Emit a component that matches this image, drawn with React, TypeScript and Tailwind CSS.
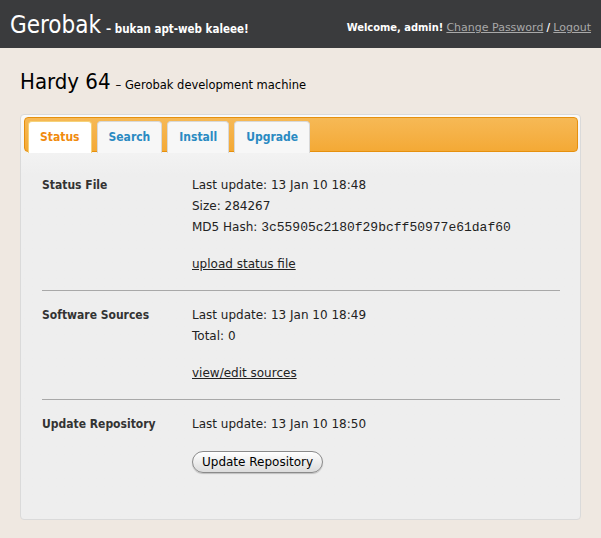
import React from "react";

const tabs = ["Status", "Search", "Install", "Upgrade"];

function Row({ label, children }: { label: string; children: React.ReactNode }) {
  return (
    <div className="grid grid-cols-[150px_1fr] pt-[14px] pb-[15px]">
      <div className="font-['DejaVu_Sans_Condensed',sans-serif] font-bold text-[#333]">{label}</div>
      <div>{children}</div>
    </div>
  );
}

export default function App() {
  return (
    <div className="min-h-[538px] bg-[#efe8e1] font-['DejaVu_Sans',sans-serif] text-[12px] leading-[21px] text-[#222]">
      {/* Header */}
      <div className="flex h-12 items-center justify-between bg-[#3a3b3d] px-[10px] font-['DejaVu_Sans_Condensed',sans-serif] text-white">
        <div className="flex items-baseline gap-[5px] pt-[5px]">
          <span className="text-[24px] leading-none">Gerobak</span>
          <span className="text-[11.5px] font-bold">– bukan apt-web kaleee!</span>
        </div>
        <div className="pt-[7px] text-[11px]">
          <span className="font-bold">Welcome, admin!</span>{" "}
          <a href="#" className="font-['DejaVu_Sans',sans-serif] text-[#a9a9a9] underline">Change Password</a>{" "}
          <span className="font-bold">/</span>{" "}
          <a href="#" className="font-['DejaVu_Sans',sans-serif] text-[#a9a9a9] underline">Logout</a>
        </div>
      </div>

      {/* Title */}
      <div className="flex items-baseline gap-[5px] px-5 pt-[20px] pb-[18px]">
        <span className="font-['DejaVu_Sans_Condensed',sans-serif] text-[22px] leading-[28px] text-black">Hardy 64</span>
        <span className="text-[11.5px] text-black">– Gerobak development machine</span>
      </div>

      {/* Panel */}
      <div className="mx-5 rounded-[4px] border border-[#dadada] bg-gradient-to-b from-[#fafafa] to-[#eeeeee] to-[60px] pt-[2px] pr-[2px] pb-[31px] pl-[3px]">
        <div className="flex h-[35px] gap-[5px] rounded-[4px] border border-[#e6900e] bg-gradient-to-b from-[#f6b955] to-[#f4a935] px-[3px] pt-[3px]">
          {tabs.map((t, i) => (
            <div
              key={t}
              className={
                "flex h-[32px] items-center rounded-t-[4px] border border-b-0 px-[11px] font-['DejaVu_Sans_Condensed',sans-serif] text-[12px] font-bold " +
                (i === 0
                  ? "border-[#f5d27a] bg-white text-[#f08a0c]"
                  : "border-[#d8d8d8] bg-[#f7f7f7] text-[#2a8ac2]")
              }
            >
              {t}
            </div>
          ))}
        </div>

        <div className="px-[18px] pt-[9px]">
          <Row label="Status File">
            <div>Last update: 13 Jan 10 18:48</div>
            <div>Size: 284267</div>
            <div>
              MD5 Hash:{" "}
              <span className="font-['Liberation_Mono',monospace] text-[13px]">3c55905c2180f29bcff50977e61daf60</span>
            </div>
            <div className="mt-4">
              <a href="#" className="underline">upload status file</a>
            </div>
          </Row>
          <div className="border-t border-[#a8a8a8]" />
          <Row label="Software Sources">
            <div>Last update: 13 Jan 10 18:49</div>
            <div>Total: 0</div>
            <div className="mt-4">
              <a href="#" className="underline">view/edit sources</a>
            </div>
          </Row>
          <div className="border-t border-[#a8a8a8]" />
          <Row label="Update Repository">
            <div>Last update: 13 Jan 10 18:50</div>
            <button className="mt-[16px] h-[22px] rounded-full border border-[#8a8a8a] bg-gradient-to-b from-white to-[#dcdcdc] px-[9px] text-[12px] leading-[20px] text-black shadow-[0_1px_1px_rgba(0,0,0,0.2)]">
              Update Repository
            </button>
          </Row>
        </div>
      </div>
    </div>
  );
}
